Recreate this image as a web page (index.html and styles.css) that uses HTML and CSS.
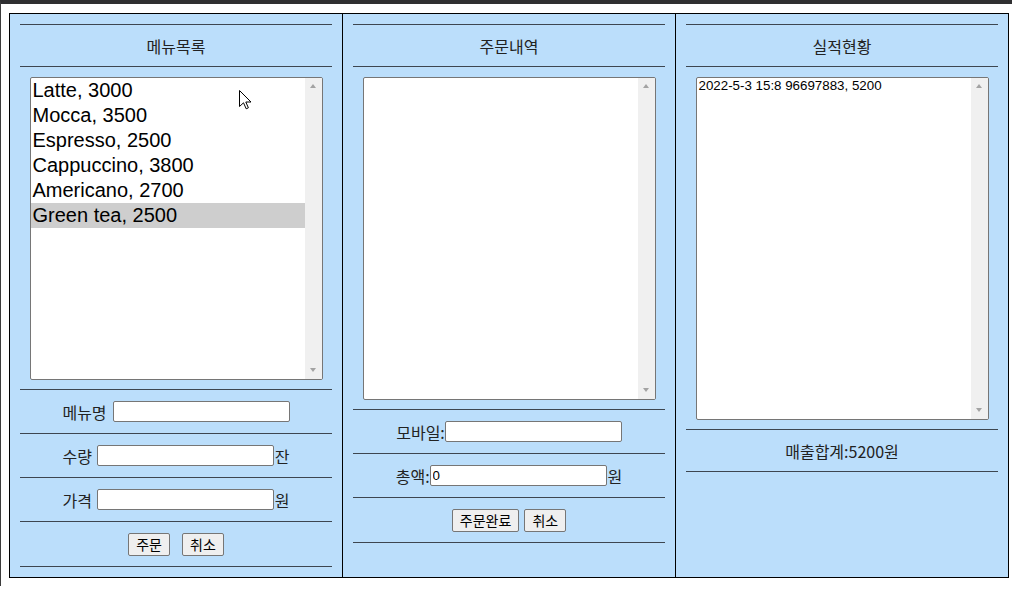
FILE: index.html
```html
<!DOCTYPE html>
<html>
<head>
  <meta charset="utf-8">
  <title>카페 주문</title>
  <link rel="stylesheet" href="styles.css">
</head>
<body>
  <div class="frame">
    <!-- 메뉴목록 -->
    <div class="col">
      <div class="rule"></div>
      <div class="title">메뉴목록</div>
      <div class="rule"></div>
      <div class="box-wrap">
        <div class="listbox menu-list">
          <div class="options">
            <div class="opt">Latte, 3000</div>
            <div class="opt">Mocca, 3500</div>
            <div class="opt">Espresso, 2500</div>
            <div class="opt">Cappuccino, 3800</div>
            <div class="opt">Americano, 2700</div>
            <div class="opt selected">Green tea, 2500</div>
          </div>
          <div class="scrollbar"><span class="arrow up"></span><span class="arrow down"></span></div>
        </div>
      </div>
      <div class="rule"></div>
      <div class="row">
        <label class="gap6">메뉴명</label><input type="text">
      </div>
      <div class="rule"></div>
      <div class="row">
        <label class="gap5">수량</label><input type="text"><span class="unit">잔</span>
      </div>
      <div class="rule"></div>
      <div class="row">
        <label class="gap5">가격</label><input type="text"><span class="unit">원</span>
      </div>
      <div class="rule"></div>
      <div class="row row-btn">
        <button>주문</button><button class="wide-gap">취소</button>
      </div>
      <div class="rule"></div>
    </div>

    <!-- 주문내역 -->
    <div class="col col-line">
      <div class="rule"></div>
      <div class="title">주문내역</div>
      <div class="rule"></div>
      <div class="box-wrap">
        <div class="listbox order-list">
          <div class="options"></div>
          <div class="scrollbar"><span class="arrow up"></span><span class="arrow down"></span></div>
        </div>
      </div>
      <div class="rule"></div>
      <div class="row">
        <label>모바일:</label><input type="text">
      </div>
      <div class="rule"></div>
      <div class="row">
        <label>총액:</label><input type="text" value="0"><span class="unit">원</span>
      </div>
      <div class="rule"></div>
      <div class="row row-btn">
        <button>주문완료</button><button class="small-gap">취소</button>
      </div>
      <div class="rule"></div>
    </div>

    <!-- 실적현황 -->
    <div class="col col-line">
      <div class="rule"></div>
      <div class="title">실적현황</div>
      <div class="rule"></div>
      <div class="box-wrap">
        <div class="listbox sales-list">
          <div class="options">
            <div class="opt">2022-5-3 15:8 96697883, 5200</div>
          </div>
          <div class="scrollbar"><span class="arrow up"></span><span class="arrow down"></span></div>
        </div>
      </div>
      <div class="rule"></div>
      <div class="title total">매출합계:5200원</div>
      <div class="rule"></div>
    </div>

    <svg class="cursor" width="13" height="20" viewBox="0 0 13 20">
      <path d="M0.5 0.5 L0.5 16.5 L4.5 12.8 L7.2 18.8 L9.4 17.8 L6.8 12 L12 12 Z" fill="#fff" stroke="#000" stroke-width="1" stroke-linejoin="miter"/>
    </svg>
  </div>
</body>
</html>
```

FILE: styles.css
```css
body {
  margin: 0;
  padding: 9px 8px 8px 8px;
  border-top: 4px solid #2f2f31;
  border-left: 1px solid #3c3c3c;
  background-color: #fff;
  font-family: "Noto Sans CJK KR", "Liberation Sans", sans-serif;
  color: #222;
}

/* three columns */
.frame {
  position: relative;
  display: flex;
  width: 1000px;
  height: 565px;
  box-sizing: border-box;
  border: 1px solid #000;
  background-color: #bbdefb;
}

.col {
  width: 332px;
  padding: 10px 10px 0 10px;
  box-sizing: border-box;
  flex: none;
}

.col-line {
  width: 333px;
  border-left: 1px solid #000;
}

.rule {
  border-top: 1px solid #3d4650;
}

.title {
  height: 41px;
  display: flex;
  align-items: center;
  justify-content: center;
  font-size: 16px;
  line-height: 20px;
}

.total {
  height: 41px;
}

/* list boxes */
.box-wrap {
  padding: 10px 0 9px 0;
  display: flex;
  justify-content: center;
}

.listbox {
  width: 293px;
  box-sizing: border-box;
  border: 1px solid #767676;
  border-radius: 2px;
  background-color: #fff;
  display: flex;
  overflow: hidden;
}

.menu-list { height: 303px; }
.order-list { height: 323px; }
.sales-list { height: 343px; }

.options {
  flex: 1;
  font-family: "Liberation Sans", Arial, sans-serif;
  color: #000;
}

.menu-list .opt {
  font-size: 20px;
  line-height: 24px;
  height: 24px;
  padding: 0 2px 1px 2px;
}

.sales-list .opt {
  font-size: 13.33px;
  line-height: 16px;
  padding: 0 2px;
}

.opt.selected {
  background-color: #cecece;
}

.scrollbar {
  width: 17px;
  flex: none;
  background-color: #f0f0f0;
  position: relative;
}

.arrow {
  position: absolute;
  left: 5px;
  width: 0;
  height: 0;
  border-left: 3.5px solid transparent;
  border-right: 3.5px solid transparent;
}

.arrow.up {
  top: 6px;
  border-bottom: 4px solid #a3a3a3;
}

.arrow.down {
  bottom: 7px;
  border-top: 4px solid #a3a3a3;
}

/* form rows */
.row {
  height: 43px;
  display: flex;
  align-items: center;
  justify-content: center;
  font-size: 16px;
  line-height: 20px;
}

.row-btn {
  height: 44px;
}

.gap6 { margin-right: 6px; }
.gap5 { margin-right: 5px; }

input[type="text"] {
  width: 177px;
  height: 21px;
  box-sizing: border-box;
  border: 1px solid #767676;
  border-radius: 2px;
  padding: 1px 2px;
  font-family: "Liberation Sans", Arial, sans-serif;
  font-size: 13.33px;
  background-color: #fff;
  color: #000;
  margin: 0;
}

.unit {
  margin-left: 1px;
}

button {
  font-family: "Noto Sans CJK KR", sans-serif;
  font-size: 14px;
  line-height: 19px;
  padding: 1px 7px;
  border: 1px solid #767676;
  border-radius: 2px;
  background-color: #efefef;
  color: #000;
  margin: 0;
}

.wide-gap { margin-left: 12px; }
.small-gap { margin-left: 5px; }

.cursor {
  position: absolute;
  left: 229px;
  top: 76px;
}
```
